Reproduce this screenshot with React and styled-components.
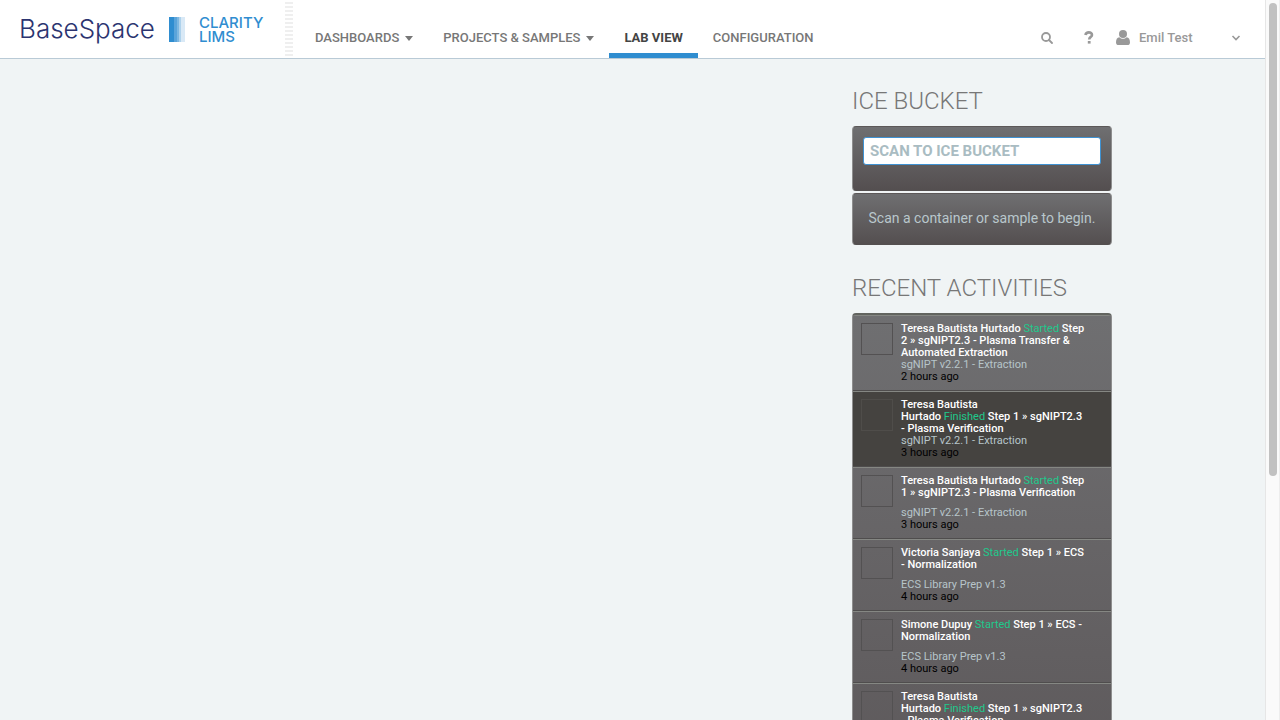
import React from "react";
import styled, { createGlobalStyle } from "styled-components";

const GlobalStyle = createGlobalStyle`
  *, *::before, *::after { box-sizing: border-box; }
  body {
    margin: 0;
    background: #f0f4f5;
    font-family: Roboto, "Liberation Sans", sans-serif;
  }
  h2, p, ul { margin: 0; padding: 0; }
`;

const Viewport = styled.div`
  display: flex;
  height: 100vh;
  overflow: hidden;
`;

const Page = styled.div`
  flex: 1;
  min-width: 0;
  overflow: hidden;
`;

const ScrollTrack = styled.div`
  flex: none;
  width: 15px;
  padding: 3px 3px 0;
  background: #fafafa;
  border-left: 1px solid #e6e6e6;
  border-right: 1px solid #ededed;
`;

const ScrollThumb = styled.div`
  width: 8px;
  height: 66%;
  border-radius: 4px;
  background: #c1c1c1;
`;

const Header = styled.header`
  display: flex;
  height: 59px;
  background: #fff;
  border-bottom: 1px solid #b9cad6;
`;

const Brand = styled.a`
  display: flex;
  align-items: flex-start;
  width: 285px;
  padding: 16px 0 0 19px;
  color: #2b3470;
  text-decoration: none;
`;

const BrandName = styled.span`
  width: 150px;
  font: 300 26px/26px Inter, "Liberation Sans", sans-serif;
`;

const BrandMark = styled.svg`
  flex: none;
  width: 16px;
  height: 26px;
`;

const ProductName = styled.span`
  margin-left: 14px;
  color: #2f8dd0;
  font: 500 15px/14px Inter, "Liberation Sans", sans-serif;
`;

const Grip = styled.div`
  width: 8px;
  height: 54px;
  margin-top: 2px;
  background: repeating-linear-gradient(#efefef 0 2px, #fff 2px 4px);
`;

const Nav = styled.nav`
  display: flex;
  margin-left: 7px;
`;

const NavLink = styled.a`
  display: flex;
  align-items: center;
  gap: 6px;
  height: 58px;
  padding: 30px 15px 7px;
  border-bottom: 5px solid ${(p) => (p.$active ? "#2f8dd0" : "transparent")};
  color: ${(p) => (p.$active ? "#444" : "#777")};
  font-size: 13px;
  font-weight: ${(p) => (p.$active ? 700 : 500)};
  line-height: 16px;
  white-space: nowrap;
  text-decoration: none;
`;

const Caret = styled.span`
  border: 4px solid transparent;
  border-top: 5px solid #777;
  border-bottom: 0;
`;

const Tools = styled.div`
  display: flex;
  align-items: center;
  margin-left: auto;
  padding: 17px 24px 0 0;
  color: #999;
`;

const ToolButton = styled.button`
  display: flex;
  align-items: center;
  padding: 0;
  border: 0;
  background: none;
  color: inherit;
  font: 500 13px/16px Roboto, sans-serif;
`;

const HelpButton = styled(ToolButton)`
  margin: 0 22px 0 31px;
`;

const UserName = styled.span`
  width: 92px;
  margin-left: 9px;
  text-align: left;
`;

const Main = styled.main`
  display: flex;
  justify-content: flex-end;
  padding: 26px 153px 0 16px;
`;

const Sidebar = styled.aside`
  width: 260px;
`;

const Heading = styled.h2`
  margin-bottom: 9px;
  color: #777;
  font-size: 24px;
  font-weight: 300;
  line-height: 32px;
  white-space: nowrap;
`;

const Panel = styled.div`
  border: 1px solid #8e8e8e;
  border-top-color: #5c5858;
  border-bottom-color: #545050;
  border-radius: 4px;
  background: linear-gradient(#6f6f71, #544f50);
`;

const ScanPanel = styled(Panel)`
  height: 65px;
  margin-bottom: 2px;
  padding: 10px;
`;

const ScanInput = styled.input`
  display: block;
  width: 100%;
  height: 28px;
  padding: 0 6px;
  border: 1px solid #3f92d2;
  border-radius: 3px;
  outline: 0;
  background: #fff;
  font: 700 15px/20px Roboto, sans-serif;
  &::placeholder { color: #a9bcc2; opacity: 1; }
`;

const HintPanel = styled(Panel)`
  height: 52px;
  margin-bottom: 27px;
  padding: 14px 0;
  color: #b9c7cc;
  font-size: 14px;
  line-height: 20px;
  text-align: center;
  white-space: nowrap;
`;

const ActivityList = styled.ul`
  border: 1px solid #8e8e8e;
  border-top: 2px solid #62645f;
  border-radius: 4px;
  background: linear-gradient(#6f6f71, #5e5a5c);
  list-style: none;
  overflow: hidden;
`;

const ActivityRow = styled.li`
  display: flex;
  gap: 8px;
  padding: 7px 8px;
  border-top: 1px solid #858783;
  border-bottom: 1px solid #4f4d4d;
  background: ${(p) => (p.$selected ? "#454340" : "transparent")};
`;

const Avatar = styled.div`
  flex: none;
  width: 32px;
  height: 32px;
  border: 1px solid ${(p) => (p.$selected ? "#4f4d4a" : "#535152")};
`;

const ActivityText = styled.div`
  color: #000;
  font-size: 11px;
  line-height: 12px;
  white-space: nowrap;
`;

const Title = styled.p`
  min-height: 32px;
  color: #fff;
  font-weight: 500;
`;

const Status = styled.span`
  color: #1fc98c;
  font-weight: 400;
`;

const Protocol = styled.p`
  color: #b7c5ca;
`;

const activities = [
  { lines: [["Teresa Bautista Hurtado ", "Started", " Step"], ["2 » sgNIPT2.3 - Plasma Transfer &"], ["Automated Extraction"]], protocol: "sgNIPT v2.2.1 - Extraction", age: "2 hours ago" },
  { lines: [["Teresa Bautista"], ["Hurtado ", "Finished", " Step 1 » sgNIPT2.3"], ["- Plasma Verification"]], protocol: "sgNIPT v2.2.1 - Extraction", age: "3 hours ago", selected: true },
  { lines: [["Teresa Bautista Hurtado ", "Started", " Step"], ["1 » sgNIPT2.3 - Plasma Verification"]], protocol: "sgNIPT v2.2.1 - Extraction", age: "3 hours ago" },
  { lines: [["Victoria Sanjaya ", "Started", " Step 1 » ECS"], ["- Normalization"]], protocol: "ECS Library Prep v1.3", age: "4 hours ago" },
  { lines: [["Simone Dupuy ", "Started", " Step 1 » ECS -"], ["Normalization"]], protocol: "ECS Library Prep v1.3", age: "4 hours ago" },
  { lines: [["Teresa Bautista"], ["Hurtado ", "Finished", " Step 1 » sgNIPT2.3"], ["- Plasma Verification"]], protocol: "sgNIPT v2.2.1 - Extraction", age: "4 hours ago" },
];

function Activity({ lines, protocol, age, selected }) {
  return (
    <ActivityRow $selected={selected}>
      <Avatar $selected={selected} />
      <ActivityText>
        <Title>
          {lines.map(([before, status, after], i) => (
            <React.Fragment key={i}>
              {i > 0 && <br />}
              {before}
              {status && <Status>{status}</Status>}
              {after}
            </React.Fragment>
          ))}
        </Title>
        <Protocol>{protocol}</Protocol>
        <p>{age}</p>
      </ActivityText>
    </ActivityRow>
  );
}

export default function App() {
  return (
    <Viewport>
      <GlobalStyle />
      <Page>
        <Header>
          <Brand href="#home">
            <BrandName>BaseSpace</BrandName>
            <BrandMark viewBox="0 0 16 26" aria-hidden="true">
              <path fill="#2f8dd0" d="M0 1h5v25H0z" />
              <path fill="#5ba4da" d="M5 1h3v25H5z" />
              <path fill="#7db7e1" d="M8 1h2v25H8z" />
              <path fill="#aed2ec" d="M10 1h2v25h-2z" />
              <path fill="#d9e9f6" d="M12 1h4v25h-4z" />
            </BrandMark>
            <ProductName>CLARITY<br />LIMS</ProductName>
          </Brand>
          <Grip />
          <Nav>
            <NavLink href="#dashboards">DASHBOARDS <Caret /></NavLink>
            <NavLink href="#projects">PROJECTS &amp; SAMPLES <Caret /></NavLink>
            <NavLink href="#lab" $active>LAB VIEW</NavLink>
            <NavLink href="#configuration">CONFIGURATION</NavLink>
          </Nav>
          <Tools>
            <ToolButton aria-label="Search">
              <svg width="12" height="12" viewBox="0 0 12 12" fill="none" stroke="currentColor" strokeWidth="1.8">
                <circle cx="5" cy="5" r="4" />
                <path d="M8 8l3 3" strokeLinecap="round" />
              </svg>
            </ToolButton>
            <HelpButton aria-label="Help">
              <svg width="10" height="13" viewBox="0 0 10 13" fill="none" stroke="currentColor" strokeWidth="2.6">
                <path d="M1.4 4C1.8 2.2 3 1.4 4.8 1.4 6.7 1.4 8 2.4 8 3.9 8 6 5.2 5.8 5.2 8.6" />
                <path d="M3.8 11.3h2.8" />
              </svg>
            </HelpButton>
            <ToolButton>
              <svg width="14" height="15" viewBox="0 0 14 15" fill="currentColor" aria-hidden="true">
                <circle cx="7" cy="4" r="4" />
                <path d="M3.4 7.2C1 7.4 0 9.5 0 12.4 0 14 1 15 2.6 15h8.8C13 15 14 14 14 12.4 14 9.5 13 7.4 10.6 7.2 8.5 9.2 5.5 9.2 3.4 7.2z" />
              </svg>
              <UserName>Emil Test</UserName>
              <svg width="10" height="6" viewBox="0 0 10 6" fill="none" stroke="currentColor" strokeWidth="1.6" aria-hidden="true">
                <path d="M1.5 1L5 4.5 8.5 1" />
              </svg>
            </ToolButton>
          </Tools>
        </Header>
        <Main>
          <Sidebar>
            <Heading>ICE BUCKET</Heading>
            <ScanPanel>
              <ScanInput aria-label="Scan to ice bucket" placeholder="SCAN TO ICE BUCKET" />
            </ScanPanel>
            <HintPanel>Scan a container or sample to begin.</HintPanel>
            <Heading>RECENT ACTIVITIES</Heading>
            <ActivityList>
              {activities.map((a, i) => <Activity key={i} {...a} />)}
            </ActivityList>
          </Sidebar>
        </Main>
      </Page>
      <ScrollTrack><ScrollThumb /></ScrollTrack>
    </Viewport>
  );
}
